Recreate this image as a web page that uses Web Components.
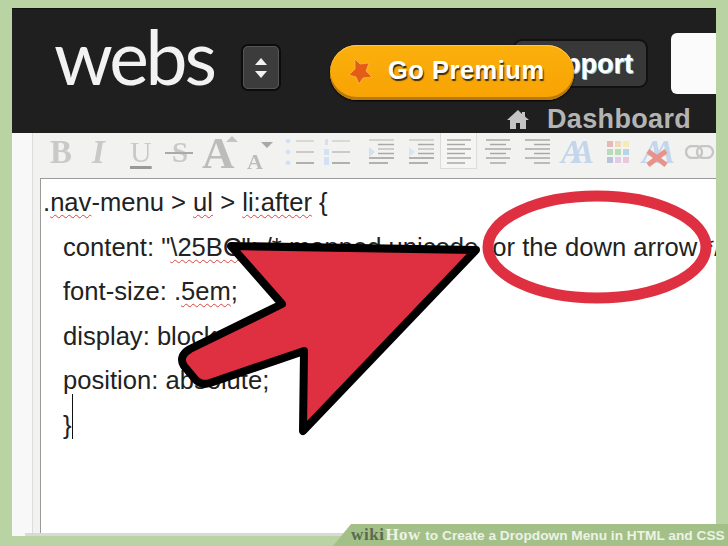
<!DOCTYPE html>
<html>
<head>
<meta charset="utf-8">
<style>
  html, body { margin: 0; padding: 0; background: #b9d3a2; }
  body { width: 728px; height: 546px; overflow: hidden; font-family: "Liberation Sans", Arial, sans-serif; }
</style>
</head>
<body>
<step-frame>
  <webs-header></webs-header>
  <editor-toolbar></editor-toolbar>
  <code-editor></code-editor>
</step-frame>
<step-marks></step-marks>
<wiki-banner></wiki-banner>

<script>
class StepFrame extends HTMLElement {
  constructor() {
    super();
    this.attachShadow({ mode: "open" }).innerHTML = `
      <style>
        :host { display: block; padding: 8px 12px 0; }
        #win { height: 528px; display: flex; flex-direction: column; background: #fff; overflow: hidden; }
      </style>
      <div id="win"><slot></slot></div>`;
  }
}

class WebsHeader extends HTMLElement {
  constructor() {
    super();
    this.attachShadow({ mode: "open" }).innerHTML = `
      <style>
        :host { display: block; position: relative; height: 125px; flex: none; background: #1f1f1f; color: #fff; overflow: hidden; border-top: 1px solid #111; box-sizing: border-box; }
        #row { display: flex; align-items: flex-start; padding: 30px 0 0 42px; }
        #logo { font: 400 75px/1 Lato, sans-serif; letter-spacing: -3.2px; margin-top: -20px; width: 187px; color: #f2f2f2; }
        #switch { width: 36px; height: 43px; margin-top: 5px; border: 2px solid #0c0c0c; outline: 1px solid #555; outline-offset: -3px; border-radius: 7px; background: #3c3c3c; display: flex; align-items: center; justify-content: center; }
        #support { margin-left: 232px; width: 135px; height: 49px; box-sizing: border-box; background: #383838; border: 2px solid #111; border-radius: 9px; font: bold 27px/46px "Liberation Sans", sans-serif; text-align: right; padding-right: 13px; text-shadow: 1px 1px 0 #8fd0ea; }
        #blank { margin-left: 23px; flex: 1; height: 61px; margin-top: -6px; background: #fbfbfb; border-radius: 6px 0 0 6px; }
        #dash { position: absolute; left: 495px; top: 98px; display: flex; align-items: center; gap: 18px; font: bold 27px/25px "Liberation Sans", sans-serif; color: #b4b4b4; letter-spacing: .35px; white-space: nowrap; }
        #premium { position: absolute; left: 318px; top: 36px; width: 244px; height: 55px; box-sizing: border-box; padding-left: 58px; background: linear-gradient(#fbb00c, #f8a405 85%); border-radius: 27px; box-shadow: inset 0 -3px 0 #b97a0c, inset 0 1px 0 #ffc651, 0 1px 2px #000; font: bold 25.5px/51px "Liberation Sans", sans-serif; letter-spacing: .5px; color: #fff; text-shadow: 1px 2px 1px #3b2a10; white-space: nowrap; }
        #premium svg { position: absolute; left: 19px; top: 13px; }
      </style>
      <div id="row">
        <div id="logo">webs</div>
        <div id="switch">
          <svg width="14" height="22" viewBox="0 0 14 22"><path d="M7 1l6 7H1zM7 21l6-7H1z" fill="#f2f2f2"/></svg>
        </div>
        <div id="support">Support</div>
        <div id="blank"></div>
      </div>
      <div id="dash">
        <svg width="22" height="19" viewBox="0 0 22 19"><path d="M11 0L0 10h3v9h6v-6h4v6h6v-9h3l-4-3.6V2h-3v2z" fill="#c4c4c4"/></svg>
        <span>Dashboard</span>
      </div>
      <div id="premium">
        <svg width="24" height="27" viewBox="0 0 24 27"><path d="M6 1l5 5 9-1-3 8 6 6-9 1-4 6-3-7-7-2 6-6z" fill="#e45d17" stroke="#fdbf5c" stroke-width=".7"/></svg>
        Go Premium
      </div>`;
  }
}

class EditorToolbar extends HTMLElement {
  constructor() {
    super();
    const lines = (ys, color) => ys.map(([x1, x2, y, c]) =>
      `<path d="M${x1} ${y}H${x2}" stroke="${c || color}" stroke-width="1.5"/>`).join("");
    const list = `<svg width="30" height="26" viewBox="0 0 30 26">
      <g fill="#d3e2f2"><circle cx="3" cy="2" r="2.4"/><circle cx="3" cy="13" r="2.4"/><circle cx="3" cy="24" r="2.4"/></g>
      ${lines([[11, 29, 2, "#cfcfcf"], [11, 29, 13, "#bdbdbd"], [11, 29, 24, "#9a9a9a"]])}</svg>`;
    const olist = `<svg width="30" height="26" viewBox="0 0 30 26">
      <g fill="#d3e2f2"><rect x="2" y="0" width="3" height="6"/><rect x="1" y="10" width="5" height="6"/><rect x="1" y="18" width="5" height="8"/></g>
      ${lines([[9, 27, 2, "#cfcfcf"], [9, 27, 13, "#bdbdbd"], [9, 27, 24, "#9a9a9a"]])}</svg>`;
    const indent = (fill) => `<svg width="28" height="26" viewBox="0 0 28 26">
      <path d="M1 8l6 5-6 5z" fill="${fill}"/>
      ${lines([[1, 26, 1, "#c8c8c8"], [10, 26, 5.5, "#a9a9a9"], [10, 26, 10, "#c0c0c0"], [10, 26, 14.5, "#a9a9a9"], [1, 26, 19, "#9c9c9c"], [1, 20, 24, "#9c9c9c"]])}</svg>`;
    const align = (rows) => `<svg width="28" height="26" viewBox="0 0 28 26">${lines(rows, "#a8a8a8")}</svg>`;
    const ys = [1, 5.5, 10, 14.5, 19, 24];
    const rows = (xs) => xs.map((x, n) => [x[0], x[1], ys[n]]);
    this.attachShadow({ mode: "open" }).innerHTML = `
      <style>
        :host { display: flex; flex: none; height: 45px; box-sizing: border-box; background: #f2f2f0; color: #c9c9c9; }
        #gutter { width: 20px; flex: none; border-right: 1px solid #dcdcdc; background: #f8f8f8; }
        #icons { flex: 1; display: flex; align-items: center; padding: 0 0 7px 17px; font-family: "Liberation Serif", serif; filter: blur(.5px); }
        b, i, u, s { display: block; font-size: 33px; line-height: 30px; flex: none; }
        #b { width: 42px; font-weight: bold; }
        #i { width: 38px; font-style: italic; font-weight: bold; }
        #u { width: 35px; font-size: 30px; text-decoration: underline; text-decoration-color: #999; text-underline-offset: 4px; font-weight: normal; }
        #s { width: 37px; font-size: 29px; font-weight: bold; text-decoration: none; position: relative; padding-left: 7px; box-sizing: border-box; }
        #s::after { content: ""; position: absolute; left: 0; top: 15px; width: 28px; height: 2px; background: #aaa; }
        #a1 { font-size: 45px; line-height: 40px; color: #bcbcbc; width: 45px; position: relative; top: 1px; }
        #a2 { font-size: 22px; line-height: 23px; color: #bcbcbc; position: relative; top: 9px; width: 38px; }
        .tri { position: absolute; width: 0; height: 0; border-left: 6px solid transparent; border-right: 6px solid transparent; }
        .box { position: relative; }
        svg { display: block; flex: none; }
        #active { width: 37px; height: 36px; align-self: flex-start; border: 1px solid #dcdcdc; border-top: 0; background: #f5f5f4; display: flex; align-items: center; justify-content: center; box-sizing: border-box; padding-top: 2px; }
        #swatch { display: grid; grid-template-columns: repeat(3, 6px); grid-auto-rows: 6px; gap: 2px; margin: 0 13px 0 12px; flex: none; }
        .aa { position: relative; width: 34px; height: 32px; flex: none; font: italic bold 33px/32px "Liberation Serif", serif; letter-spacing: -11px; color: #c3d6eb; white-space: nowrap; }
      </style>
      <div id="gutter"></div>
      <div id="icons">
        <b id="b">B</b><i id="i">I</i><u id="u">U</u><s id="s">S</s>
        <b id="a1" class="box">A<span class="tri" style="left:24px;top:3px;border-bottom:6px solid #c4c4c4"></span></b>
        <b id="a2" class="box">A<span class="tri" style="left:14px;top:-8px;border-top:6px solid #a8a8a8"></span></b>
        <div style="width:38px">${list}</div>
        <div style="width:45px">${olist}</div>
        <div style="width:40px">${indent("#cfe0f0")}</div>
        <div style="width:32px">${indent("#d8e5f2")}</div>
        <div id="active">${align(rows([[2, 26], [2, 20], [2, 26], [2, 20], [2, 26], [2, 20]]))}</div>
        <div style="width:40px;margin-left:7px">${align(rows([[2, 26], [6, 22], [1, 27], [6, 22], [2, 26], [6, 22]]))}</div>
        <div style="width:37px">${align(rows([[1, 26], [10, 26], [1, 26], [10, 26], [1, 26], [10, 26]]))}</div>
        <div class="aa">AA</div>
        <div id="swatch">
          <span style="background:#e7b8b8"></span><span style="background:#f3d8b8"></span><span style="background:#f4ecb8"></span>
          <span style="background:#b8dcb8"></span><span style="background:#b8dcb8"></span><span style="background:#b8d4ea"></span>
          <span style="background:#b8c4dc"></span><span style="background:#e6c8ea"></span><span style="background:#eac8dc"></span>
        </div>
        <div class="aa" style="margin-right:9px">AA
          <svg width="24" height="20" viewBox="0 0 24 20" style="position:absolute;left:3px;top:12px"><path d="M3 3l18 14M21 3L3 17" stroke="#e8928a" stroke-width="5"/></svg>
        </div>
        <svg width="29" height="14" viewBox="0 0 29 14"><rect x="1" y="1" width="16" height="12" rx="6" fill="none" stroke="#c6c6c6" stroke-width="2.4"/><rect x="12" y="1" width="16" height="12" rx="6" fill="none" stroke="#c6c6c6" stroke-width="2.4"/></svg>
      </div>`;
  }
}

class CodeEditor extends HTMLElement {
  constructor() {
    super();
    this.attachShadow({ mode: "open" }).innerHTML = `
      <style>
        :host { display: flex; flex-direction: column; flex: 1; min-height: 0; background: #fff; }
        #body { flex: 1; min-height: 0; display: flex; }
        #gutter { width: 20px; flex: none; border-right: 1px solid #dcdcdc; background: #f8f8f8; }
        #pad { width: 7px; flex: none; background: #f2f2f0; }
        #text { flex: 1; min-width: 0; border-left: 1px solid #9b9b9b; border-top: 1px solid #9b9b9b; padding: 1px 0 0 2px; font: 25.6px/44.5px "Liberation Sans", sans-serif; color: #222; white-space: nowrap; overflow: hidden; }
        .in { padding-left: 20px; }
        em { font-style: normal; text-decoration: underline wavy #d8453f 1px; text-underline-offset: 3px; }
        #caret { display: inline-block; width: 1px; height: 45px; margin-top: -10px; background: #111; vertical-align: -5px; }
        #foot { flex: none; height: 3px; display: flex; }
        #foot i { width: 13px; background: #f8f8f8; }
        #foot b { flex: 1; background: #d9d9d9; }
      </style>
      <div id="body">
        <div id="gutter"></div>
        <div id="pad"></div>
        <div id="text">
          <div>.<em>nav</em>-menu &gt; <em>ul</em> &gt; <em>li:after</em> {</div>
          <div class="in">content: "<em>\\25BC</em>"; /* mapped unicode for the down arrow */</div>
          <div class="in">font-size: .<em>5em</em>;</div>
          <div class="in">display: block;</div>
          <div class="in">position: absolute;</div>
          <div class="in">}<span id="caret"></span></div>
        </div>
      </div>
      <div id="foot"><i></i><b></b></div>`;
  }
}

// red arrow and circle drawn over the screenshot
class StepMarks extends HTMLElement {
  constructor() {
    super();
    this.attachShadow({ mode: "open" }).innerHTML = `
      <style>
        :host { display: block; position: absolute; left: 0; top: 0; width: 728px; height: 546px; pointer-events: none; }
        svg { display: block; }
      </style>
      <svg width="728" height="546" viewBox="0 0 728 546">
        <ellipse cx="597" cy="247" rx="109" ry="51" fill="none" stroke="#df3042" stroke-width="11"/>
        <path d="M231 246L476 250L303 431L304 351L210 383Q201 386 195 379L184 366Q178 356 190 349L282 304Z" fill="#df3042" stroke="#000" stroke-width="8" stroke-linejoin="round"/>
      </svg>`;
  }
}

class WikiBanner extends HTMLElement {
  constructor() {
    super();
    this.attachShadow({ mode: "open" }).innerHTML = `
      <style>
        :host { display: block; position: absolute; left: 0; bottom: 0; width: 728px; height: 22px; overflow: hidden; }
        #bar { position: absolute; right: 0; top: 0; bottom: 0; left: 333px; background: #a3c088; clip-path: polygon(18px 0, 100% 0, 100% 100%, 0 100%); }
        #tag { position: absolute; left: 351px; top: 0; white-space: nowrap; font: bold 13.7px/22px "Liberation Sans", sans-serif; color: #edf2e6; }
        .w { font-family: "Liberation Serif", serif; font-size: 17px; color: #5a6a50; letter-spacing: .6px; }
        .h { font-family: "Liberation Serif", serif; font-size: 17px; letter-spacing: .3px; margin-left: 1px; margin-right: 1px; }
      </style>
      <div id="bar"></div>
      <div id="tag"><span class="w">wiki</span><span class="h">How</span> to Create a Dropdown Menu in HTML and CSS</div>`;
  }
}

customElements.define("step-frame", StepFrame);
customElements.define("webs-header", WebsHeader);
customElements.define("editor-toolbar", EditorToolbar);
customElements.define("code-editor", CodeEditor);
customElements.define("step-marks", StepMarks);
customElements.define("wiki-banner", WikiBanner);
</script>
</body>
</html>
